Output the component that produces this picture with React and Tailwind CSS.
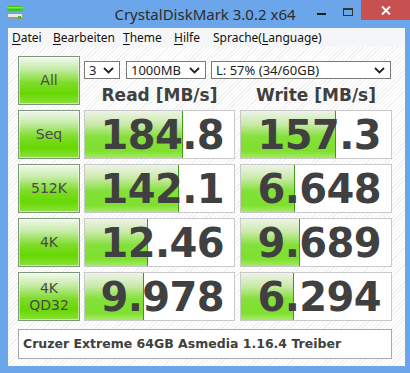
import React from 'react';

const rows = [
  { label: ['Seq'], read: '184.8', write: '157.3', rw: 98, ww: 95 },
  { label: ['512K'], read: '142.1', write: '6.648', rw: 94, ww: 54 },
  { label: ['4K'], read: '12.46', write: '9.689', rw: 63, ww: 59 },
  { label: ['4K', 'QD32'], read: '9.978', write: '6.294', rw: 59, ww: 53 },
];

const Chevron = () => (
  <svg width="11" height="7" viewBox="0 0 11 7" className="shrink-0">
    <path d="M1 1 L5.5 5.5 L10 1" fill="none" stroke="#222" strokeWidth="1.8" />
  </svg>
);

const Select = ({ value, width }) => (
  <div
    className={`flex items-center justify-between h-[18px] border border-[#7a7a7a] bg-white pl-[4px] pr-[5px] text-[13px] text-[#222] font-['Noto_Sans',sans-serif] leading-none ${width}`}
  >
    <span>{value}</span>
    <Chevron />
  </div>
);

const GreenButton = ({ lines }) => (
  <div className="h-[49px] flex flex-col items-center justify-center border border-[#7d977d] bg-[linear-gradient(to_bottom,#f2f8ee_0%,#c7ecaa_25%,#7edc2a_55%,#66d800_78%,#8ee040_100%)] shadow-[inset_0_0_0_1px_rgba(255,255,255,0.5)] text-[#4a4a4a] text-[14px] leading-[17px] font-['DejaVu_Sans',sans-serif]">
    {lines.map((l) => (
      <span key={l}>{l}</span>
    ))}
  </div>
);

const ValueBox = ({ value, fill }) => (
  <div className="relative h-[49px] border border-[#c9c9c9] bg-white overflow-hidden">
    <div
      className="absolute left-0 top-0 bottom-0 border-r border-[#3f9a1a] bg-[linear-gradient(to_bottom,#eef3ea_0%,#c9eaa8_28%,#84e03a_55%,#7ee02e_85%,#a6ea66_100%)]"
      style={{ width: fill }}
    />
    <div className="relative h-full flex items-center justify-end pr-[10px] text-[40px] font-bold tracking-[-0.6px] text-[#404040] font-['DejaVu_Sans',sans-serif] leading-none">
      {value}
    </div>
  </div>
);

const MenuItem = ({ first, rest, w }) => (
  <span className={w}>
    <span className="underline underline-offset-2">{first}</span>
    {rest}
  </span>
);

export default function App() {
  return (
    <div className="w-[410px] h-[373px] bg-[#6ba6ea] flex flex-col overflow-hidden">
      {/* Title bar */}
      <div className="relative h-[28px] shrink-0">
        <svg className="absolute left-[6px] top-[5px]" width="18" height="17" viewBox="0 0 18 17">
          <rect x="1" y="1" width="16" height="5" rx="1.5" fill="#3fc21c" />
          <rect x="1" y="2" width="16" height="1.5" fill="#7fe45a" />
          <rect x="1" y="8" width="16" height="7" rx="1.5" fill="#9a9a9a" />
          <rect x="2" y="9" width="14" height="3" fill="#e8e8e8" />
          <rect x="12" y="11" width="3" height="2.5" fill="#3fc21c" />
        </svg>
        <div className="absolute inset-x-0 top-[4px] text-center text-[15px] text-[#2b2b2b] font-['Noto_Sans',sans-serif] leading-[20px]">
          CrystalDiskMark 3.0.2 x64
        </div>
        <div className="absolute left-[317px] top-[13px] w-[9px] h-[2px] bg-[#1a1a1a]" />
        <div className="absolute left-[343px] top-[8px] w-[10px] h-[8px] border border-[#333] border-t-2" />
        <div className="absolute left-[361px] top-0 w-[49px] h-[20px] bg-[#c75050] flex items-center justify-center">
          <svg width="10" height="9" viewBox="0 0 10 9">
            <path d="M1 0.5 L9 8.5 M9 0.5 L1 8.5" stroke="#fff" strokeWidth="2" />
          </svg>
        </div>
      </div>

      <div className="flex-1 flex flex-col ml-[8px] mr-[5px] mb-[7px]">
        {/* Menu bar */}
        <div className="h-[19px] shrink-0 bg-[#f5f6f7] flex items-center pl-[4px] text-[12px] text-[#111] font-['Noto_Sans',sans-serif] leading-none">
          <MenuItem first="D" rest="atei" w="w-[41px]" />
          <MenuItem first="B" rest="earbeiten" w="w-[70px]" />
          <MenuItem first="T" rest="heme" w="w-[51px]" />
          <MenuItem first="H" rest="ilfe" w="w-[39px]" />
          <span>
            Sprache(<span className="underline underline-offset-2">L</span>anguage)
          </span>
        </div>

        {/* Content */}
        <div className="flex-1 pl-[10px] pt-[9px] bg-[repeating-linear-gradient(135deg,#ffffff_0px,#ffffff_2px,#f0f0f0_2px,#f0f0f0_3px)]">
          <div className="grid grid-cols-[62px_155px_157px] gap-y-[5px]">
            <GreenButton lines={['All']} />
            <div className="col-span-2 ml-[4px] flex flex-col">
              <div className="flex mt-[5px]">
                <Select value="3" width="w-[36px]" />
                <div className="w-[6px]" />
                <Select value="1000MB" width="w-[80px]" />
                <div className="w-[5px]" />
                <Select value="L: 57% (34/60GB)" width="w-[180px]" />
              </div>
              <div className="flex mt-[6px] text-[17px] font-bold text-[#404040] font-['DejaVu_Sans',sans-serif] leading-[20px]">
                <div className="w-[151px] text-center">Read [MB/s]</div>
                <div className="w-[5px]" />
                <div className="w-[152px] text-center">Write [MB/s]</div>
              </div>
            </div>

            {rows.map((r) => (
              <React.Fragment key={r.read}>
                <GreenButton lines={r.label} />
                <div className="ml-[4px]">
                  <ValueBox value={r.read} fill={r.rw} />
                </div>
                <div className="ml-[5px]">
                  <ValueBox value={r.write} fill={r.ww} />
                </div>
              </React.Fragment>
            ))}
          </div>

          <div className="mt-[8px] w-[374px] h-[30px] border border-[#a8a8a8] bg-white flex items-center pl-[4px] text-[12.5px] font-bold text-[#404040] font-['DejaVu_Sans',sans-serif]">
            Cruzer Extreme 64GB Asmedia 1.16.4 Treiber
          </div>
        </div>
      </div>
    </div>
  );
}
